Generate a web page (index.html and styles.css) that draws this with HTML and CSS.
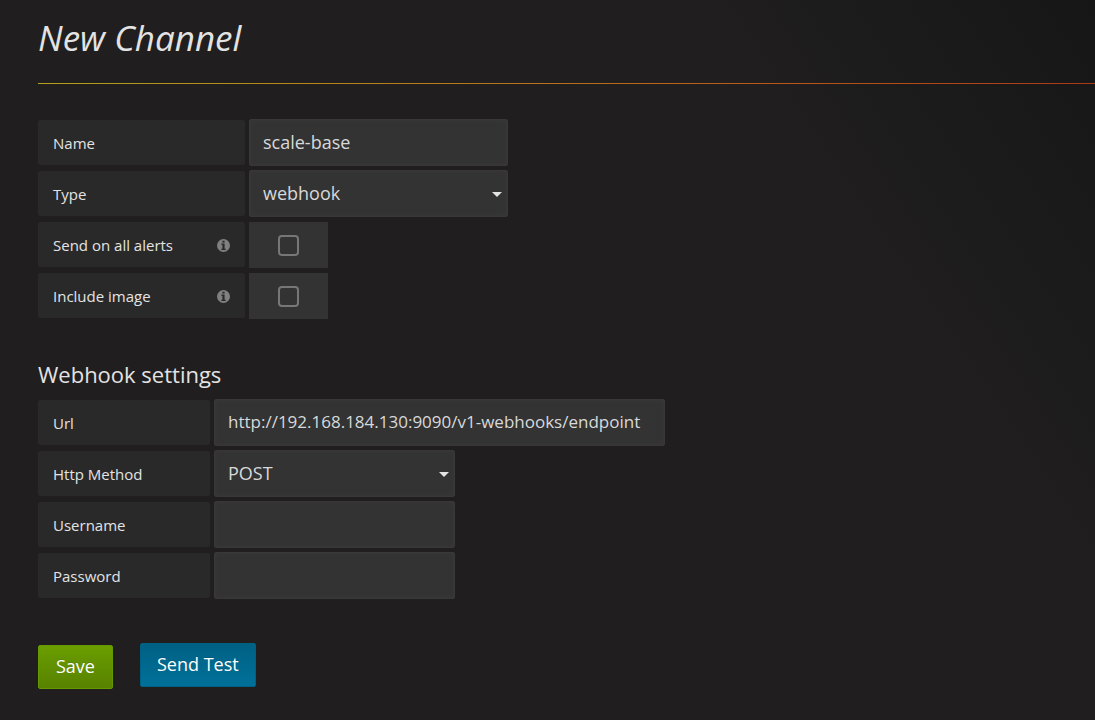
FILE: index.html
```html
<!DOCTYPE html>
<html lang="en">
<head>
<meta charset="utf-8">
<title>New Channel</title>
<link rel="stylesheet" href="styles.css">
</head>
<body>
<svg class="defs" aria-hidden="true">
  <symbol id="info" viewBox="0 0 12 12">
    <path fill-rule="evenodd" d="M6 0a6 6 0 1 1 0 12A6 6 0 0 1 6 0zM5 1.5v1.8h2V1.5zM4 4.2v1.2h1V9H4v1.2h4V9H7V4.2z"/>
  </symbol>
</svg>
<main class="page">
  <h1 class="page-title">New Channel</h1>
  <form class="form">
    <section class="group group-main">
      <div class="row">
        <label class="label" for="name">Name</label>
        <input class="field" id="name" type="text" value="scale-base">
      </div>
      <div class="row">
        <label class="label" for="type">Type</label>
        <div class="select-wrap">
          <select class="field" id="type"><option>webhook</option></select>
        </div>
      </div>
      <div class="row">
        <label class="label" for="all">Send on all alerts <svg class="info"><use href="#info"/></svg></label>
        <div class="switch"><input class="check" id="all" type="checkbox"></div>
      </div>
      <div class="row">
        <label class="label" for="image">Include image <svg class="info"><use href="#info"/></svg></label>
        <div class="switch"><input class="check" id="image" type="checkbox"></div>
      </div>
    </section>
    <section class="group group-webhook">
      <h2 class="group-title">Webhook settings</h2>
      <div class="row">
        <label class="label" for="url">Url</label>
        <input class="field field-wide" id="url" type="text" value="http://192.168.184.130:9090/v1-webhooks/endpoint">
      </div>
      <div class="row">
        <label class="label" for="method">Http Method</label>
        <div class="select-wrap">
          <select class="field" id="method"><option>POST</option></select>
        </div>
      </div>
      <div class="row">
        <label class="label" for="user">Username</label>
        <input class="field" id="user" type="text">
      </div>
      <div class="row">
        <label class="label" for="pass">Password</label>
        <input class="field" id="pass" type="password">
      </div>
    </section>
    <div class="actions">
      <button class="btn btn-save" type="submit">Save</button>
      <button class="btn btn-test" type="button">Send Test</button>
    </div>
  </form>
</main>
</body>
</html>
```
FILE: styles.css
```css
* {
  box-sizing: border-box;
}

body {
  margin: 0;
  min-height: 100vh;
  background: #201e1e linear-gradient(236deg, #161616 0%, #1a1a1a 11%, #201e1e 25%);
  color: #e3e3e3;
  font-family: "Open Sans", "Noto Sans", sans-serif;
  font-size: 15px;
}

.defs {
  position: absolute;
  width: 0;
  height: 0;
}

.page {
  padding-left: 38px;
}

.page-title {
  margin: 0;
  padding: 14px 0 21px;
  border-bottom: 1px solid;
  border-image: linear-gradient(to right, #b3a01c, #b9701a 50%, #b9521a 75%, #a83a18) 1;
  font-size: 35px;
  font-style: italic;
  font-weight: 400;
  line-height: 48px;
}

.form {
  padding-top: 35px;
}

.group {
  display: grid;
  gap: 4px;
}

.group-main {
  --label-width: 207px;
  --field-width: 259px;
}

.group-webhook {
  --label-width: 172px;
  --field-width: 241px;
  margin-top: 39px;
}

.group-title {
  margin: 0 0 5px;
  font-size: 22px;
  font-weight: 400;
  line-height: 32px;
}

.row {
  display: flex;
  align-items: center;
  gap: 4px;
  min-height: 47px;
}

.label {
  display: flex;
  flex: none;
  align-items: center;
  justify-content: space-between;
  width: var(--label-width);
  height: 45px;
  padding: 0 15px;
  border-radius: 2px;
  background: #292929;
  line-height: 22px;
}

.info {
  width: 13px;
  height: 13px;
  margin-top: 2px;
  fill: #808080;
}

.field {
  width: var(--field-width);
  height: 47px;
  padding: 0 13px 2px;
  border: 1px solid #383838;
  border-radius: 2px;
  outline: 0;
  background: #333;
  box-shadow: inset 0 0 5px #3a3a3a;
  color: #d8d9da;
  font: inherit;
  font-size: 18px;
  appearance: none;
}

.field-wide {
  width: 451px;
  font-size: 17px;
}

.select-wrap {
  display: grid;
  align-items: center;
}

.select-wrap .field,
.select-wrap::after {
  grid-area: 1 / 1;
}

.select-wrap::after {
  z-index: 1;
  justify-self: end;
  margin: 2px 6px 0 0;
  border: 5px solid transparent;
  border-top-color: #e3e3e3;
  border-bottom: 0;
  content: "";
  pointer-events: none;
}

.switch {
  display: grid;
  place-items: center;
  align-self: end;
  width: 79px;
  height: 46px;
  background: #333;
}

.check {
  width: 21px;
  height: 21px;
  margin: 0;
  border: 2px solid #777;
  border-radius: 4px;
  appearance: none;
}

.actions {
  display: flex;
  align-items: flex-start;
  gap: 27px;
  padding: 44px 0 31px;
}

.btn {
  height: 44px;
  padding: 0 16px 2px;
  border: 1px solid;
  border-radius: 2px;
  color: #fff;
  font: inherit;
  font-size: 18px;
  text-shadow: 0 -1px 0 rgba(0, 0, 0, 0.1);
}

.btn-save {
  margin-top: 2px;
  padding: 0 17px 2px;
  border-color: #669900;
  background: linear-gradient(#6a9e00, #588200);
}

.btn-test {
  border-color: #006187;
  background: linear-gradient(#006083, #00719a);
}
```
